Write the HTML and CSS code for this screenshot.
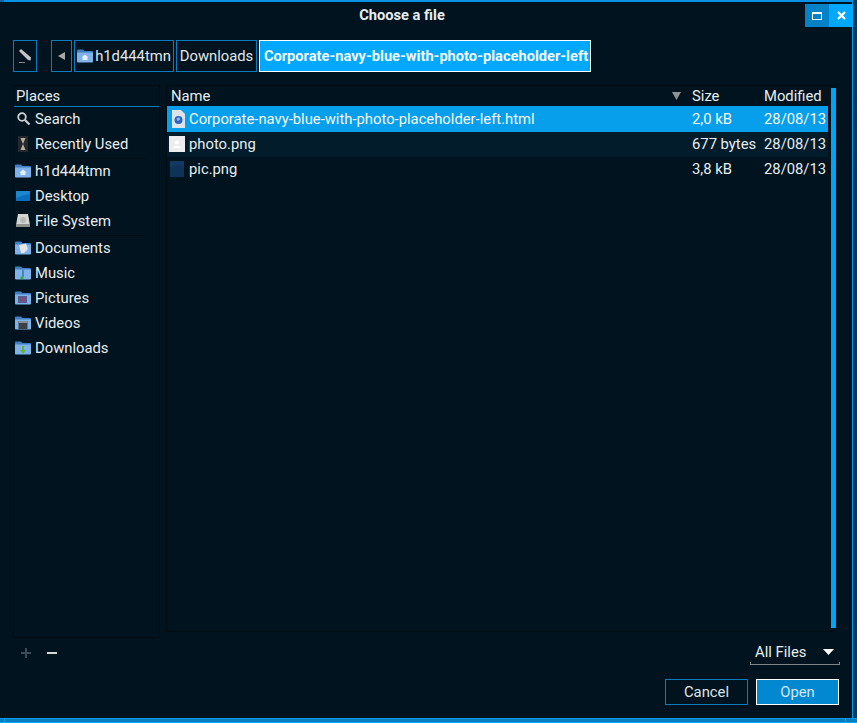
FILE: index.html
```html
<!DOCTYPE html>
<html lang="en">
<head>
<meta charset="utf-8">
<title>Choose a file</title>
<link rel="stylesheet" href="styles.css">
</head>
<body>
<div class="frame">
  <header class="titlebar">
    <span class="title">Choose a file</span>
    <div class="wm">
      <button class="wm-btn wm-max"><svg width="10" height="8" viewBox="0 0 10 8"><path d="M0 0H10V8H0Z M1 2V7H9V2Z" fill="#fff" fill-rule="evenodd"/></svg></button>
      <button class="wm-btn wm-close"><svg width="9" height="9" viewBox="0 0 9 9"><path d="M1 1L8 8M8 1L1 8" stroke="#fff" stroke-width="2.200"/></svg></button>
    </div>
  </header>

  <div class="pathbar">
    <button class="pbtn pencil"><svg width="14" height="16" viewBox="0 0 14 16"><path d="M1 3L3 1L13 9.500L12.500 12.500L10 12Z" fill="#c4c4c4"/><rect x="1" y="14" width="6" height="1" fill="#888"/></svg></button>
    <button class="pbtn back"><svg width="7" height="8" viewBox="0 0 7 8"><path d="M7 0V8L0 4Z" fill="#a8a8a8"/></svg></button>
    <button class="pbtn home"><svg class="ico" width="16" height="14" viewBox="0 0 16 14"><use href="#folder"/><path d="M8 5.500L11.500 8.500H10.500V11H5.500V8.500H4.500Z" fill="#e4eefa"/></svg>h1d444tmn</button>
    <button class="pbtn dl">Downloads</button>
    <button class="pbtn cur">Corporate-navy-blue-with-photo-placeholder-left</button>
  </div>

  <main class="panes">
    <aside class="places">
      <div class="places-head">Places</div>
      <div class="place"><svg class="pi" width="16" height="16" viewBox="0 0 16 16"><circle cx="7" cy="6" r="3.800" fill="none" stroke="#cfd3d6" stroke-width="1.800"/><path d="M10 9L14.500 13.500" stroke="#cfd3d6" stroke-width="2.200"/></svg>Search</div>
      <div class="place"><svg class="pi" width="16" height="18" viewBox="0 0 16 18"><rect x="3" y="1" width="10" height="16" fill="#26292b"/><path d="M5.500 3H10.500L8 9L10.500 15H5.500L8 9Z" fill="#b9b2a0"/></svg>Recently Used</div>
      <div class="sep"></div>
      <div class="place"><svg class="pi" width="16" height="14" viewBox="0 0 16 14"><use href="#folder"/><path d="M8 5.500L11.500 8.500H10.500V11H5.500V8.500H4.500Z" fill="#e4eefa"/></svg>h1d444tmn</div>
      <div class="place"><svg class="pi" width="16" height="12" viewBox="0 0 16 12"><rect x="1" width="14" height="10" y="1" fill="#1c86cf"/><path d="M1 8Q8 5 15 4V11H1Z" fill="#0b6fc0"/></svg>Desktop</div>
      <div class="place"><svg class="pi" width="16" height="15" viewBox="0 0 16 15"><path d="M3 1H13L15 12H1Z" fill="#d5d5d2"/><rect x="1" y="11" width="14" height="3" fill="#8f8f8c"/><circle cx="8" cy="7" r="3" fill="#b8b8b5"/></svg>File System</div>
      <div class="sep"></div>
      <div class="place"><svg class="pi" width="16" height="14" viewBox="0 0 16 14"><use href="#folder"/><path d="M4 4L11 2.500L13 8L9 12H6Z" fill="#e6e6e6"/></svg>Documents</div>
      <div class="place"><svg class="pi" width="16" height="14" viewBox="0 0 16 14"><use href="#folder"/><path d="M8 4V11" stroke="#1f6f8a" stroke-width="1.200"/><rect x="5.500" y="10.500" width="3" height="2.500" fill="#3fae3f"/></svg>Music</div>
      <div class="place"><svg class="pi" width="16" height="14" viewBox="0 0 16 14"><use href="#folder"/><rect x="3" y="5" width="9" height="7" fill="#5a5d88"/><rect x="6" y="6.500" width="2.500" height="3.500" fill="#a53a7c"/></svg>Pictures</div>
      <div class="place"><svg class="pi" width="16" height="14" viewBox="0 0 16 14"><use href="#folder"/><rect x="3.500" y="5" width="9" height="8" fill="#3d4044"/><rect x="3.500" y="5" width="9" height="2" fill="#8a8d90"/></svg>Videos</div>
      <div class="place"><svg class="pi" width="16" height="14" viewBox="0 0 16 14"><use href="#folder"/><path d="M7 5H9V9H11L8 13L5 9H7Z" fill="#62b23a"/></svg>Downloads</div>
    </aside>

    <section class="files">
      <div class="list">
        <div class="thead">
          <span class="h-name">Name<svg class="sort" width="9" height="9" viewBox="0 0 9 9"><path d="M0 0H9L4.500 8Z" fill="#8d9295"/></svg></span>
          <span class="h-col">Size</span>
          <span class="h-col">Modified</span>
        </div>
        <div class="row selected">
          <svg class="fi" width="18" height="18" viewBox="0 0 18 18"><path d="M3 0H12L16 4V18H3Z" fill="#dde3e8"/><circle cx="9.500" cy="10" r="4" fill="#2b63c6"/><path d="M7.500 8L10.500 7.500L11 10L8.500 11Z" fill="#8fc1ee"/></svg>
          <span>Corporate-navy-blue-with-photo-placeholder-left.html</span>
          <span>2,0 kB</span>
          <span>28/08/13</span>
        </div>
        <div class="row alt">
          <svg class="fi" width="16" height="16" viewBox="0 0 16 16"><rect width="16" height="16" fill="#ededed"/><circle cx="8" cy="6.500" r="2" fill="#fff"/><path d="M4 12Q8 7.500 12 12Z" fill="#fff"/></svg>
          <span>photo.png</span>
          <span>677 bytes</span>
          <span>28/08/13</span>
        </div>
        <div class="row">
          <svg class="fi" width="15" height="16" viewBox="0 0 15 16"><rect x="1" width="14" height="16" fill="#123a63"/><path d="M1 6Q8 3 15 5V16H1Z" fill="#0f3258"/></svg>
          <span>pic.png</span>
          <span>3,8 kB</span>
          <span>28/08/13</span>
        </div>
      </div>
      <div class="scrollbar"></div>
    </section>
  </main>

  <div class="tools">
    <div class="plusminus">
      <svg width="10" height="10" viewBox="0 0 10 10"><path d="M0 4H10V6H0Z M4 0H6V10H4Z" fill="#3b4a55"/></svg>
      <svg width="10" height="2" viewBox="0 0 10 2"><rect width="10" height="2" fill="#d8d8d8"/></svg>
    </div>
    <div class="combo"><span>All Files</span><svg width="11" height="6" viewBox="0 0 11 6"><path d="M0 0H11L5.500 6Z" fill="#fff"/></svg></div>
  </div>

  <div class="actions">
    <button class="act cancel">Cancel</button>
    <button class="act open">Open</button>
  </div>
  <div class="bottom-edge"></div>
</div>

<svg class="defs" width="0" height="0" aria-hidden="true"><defs>
  <g id="folder"><path d="M0 1.500Q0 .5 1 .5H6L7.500 2H15Q16 2 16 3V4H0Z" fill="#3f7fc4"/><path d="M0 3.500H16V12.500Q16 13.500 15 13.500H1Q0 13.500 0 12.500Z" fill="#7fb2ea"/></g>
</defs></svg>
</body>
</html>
```
FILE: styles.css
```css
* { box-sizing: border-box; }
html, body { margin: 0; height: 100%; }
body { background: #00131f; overflow: hidden; font-family: Roboto, "Liberation Sans", sans-serif; font-size: 14.8px; color: #e8edf0; }
button { font: inherit; color: inherit; background: none; padding: 0; margin: 0; }
.defs { position: absolute; }

.frame { width: 857px; height: 723px; padding-top: 3px; display: flex; flex-direction: column; position: relative; background: #00131f; border-top: 2px solid #0a93e6; }
.frame::before { content: ""; position: absolute; top: -2px; left: 0; width: 4px; height: 2px; background: #0a6aa6; }
.frame::after { content: ""; position: absolute; top: -2px; right: 0; bottom: 0; width: 5px; background: linear-gradient(90deg, #0a93e6 0 1px, #073a56 1px); }

.titlebar { height: 24px; display: flex; justify-content: center; align-items: center; position: relative; margin-top: -2px; padding-right: 53px; flex: none; }
.title { font-weight: 700; font-size: 14.67px; }
.wm { position: absolute; right: 4px; top: 1px; display: flex; z-index: 1; }
.wm-btn { width: 24px; height: 23px; border: 0; display: flex; align-items: center; justify-content: center; }
.wm-max { background: #0382c8; }
.wm-close { background: #00a8ff; }

.pathbar { display: flex; height: 32px; margin: 13px 0 0 13px; gap: 2px; flex: none; }
.pbtn { height: 32px; border: 1px solid #0a7cc0; display: flex; align-items: center; justify-content: center; white-space: nowrap; padding: 0 0 1px; color: #e3e7ea; }
.pencil { width: 24px; margin-right: 12px; }
.back { width: 21px; }
.home { width: 100px; }
.home .ico { margin-right: 2px; }
.dl { width: 81px; }
.cur { width: 332px; background: #00a8ff; border-color: #fff; color: #f2f8fc; font-weight: 700; font-size: 14.67px; padding-left: 2px; }

.panes { display: flex; height: 553px; margin: 13px 0 0 13px; gap: 6px; flex: none; }
.places { width: 147px; height: 553px; border: 1px solid #000c14; display: flex; flex-direction: column; }
.places-head { height: 21px; border-bottom: 1px solid #0a7cc0; padding-left: 2px; line-height: 21px; flex: none; }
.place { height: 25px; display: flex; align-items: center; white-space: nowrap; padding: 0 0 2px 1px; flex: none; }
.pi { margin-right: 4px; flex: none; }
.sep { height: 2px; flex: none; border-bottom: 1px solid #000d16; margin: 0 14px; }

.files { width: 671px; display: flex; height: 547px; border: 1px solid #000c14; border-right: 0; }
.list { width: 661px; flex: none; }
.thead { height: 20px; display: grid; grid-template-columns: 1fr 72px 64px; align-items: center; padding-left: 4px; line-height: 19px; }
.h-name { display: flex; align-items: center; justify-content: space-between; padding-right: 11px; }
.row { height: 25px; display: grid; grid-template-columns: 20px 1fr 72px 64px; align-items: center; padding: 0 0 1px 2px; white-space: nowrap; }
.selected { height: 26px; background: #079eeb; color: #f2f8fc; padding-bottom: 0; }
.alt { background: #021c2c; }
.scrollbar { width: 5px; height: 540px; margin: 2px 0 0 3px; background: #00a4f5; flex: none; }

.tools { display: flex; justify-content: space-between; align-items: flex-start; margin-top: 1px; padding: 0 17px 0 21px; height: 32px; flex: none; }
.plusminus { display: flex; align-items: center; gap: 16px; height: 24px; margin-top: 2px; }
.combo { width: 90px; height: 24px; margin-top: 2px; border-bottom: 1px solid #7e8488; display: flex; align-items: center; justify-content: space-between; padding: 0 6px 1px 5px; position: relative; }
.combo::before, .combo::after { content: ""; position: absolute; bottom: -1px; width: 1px; height: 3px; background: #7e8488; }
.combo::before { left: 0; }
.combo::after { right: 0; }

.actions { display: flex; justify-content: flex-end; gap: 8px; padding-right: 18px; margin-top: 8px; flex: none; }
.act { width: 83px; height: 26px; }
.cancel { border: 1px solid #0a7cc0; color: #dfe4e7; }
.open { background: #0288d1; border: 1px solid #fff; color: #cfe6f4; }

.bottom-edge { position: absolute; left: 0; right: 0; bottom: 0; height: 5px; background: linear-gradient(90deg, #0a7cc0 4px, #00a8ff 4px 5px, #0a7cc0 5px 845px, #00a8ff 845px 846px, #0a7cc0 846px); border-top: 1px solid #0a9cf0; border-bottom: 1px solid #00a8ff; z-index: 1; }
```
